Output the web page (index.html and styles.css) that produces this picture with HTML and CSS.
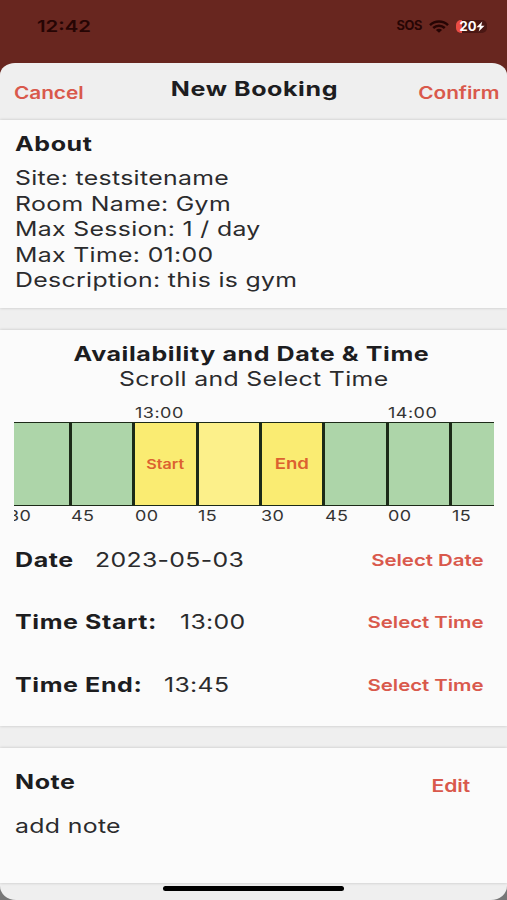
FILE: index.html
```html
<!DOCTYPE html>
<html lang="en">
  <head>
    <meta charset="UTF-8" />
    <title>New Booking</title>
    <link rel="stylesheet" href="styles.css">
  </head>
  <body>
    <div class="status-bar">
      <span class="clock wide">12:42</span>
      <div class="status-icons">
        <span class="sos">SOS</span>
        <svg class="wifi" viewBox="0 0 20 13" width="20" height="13" preserveAspectRatio="none">
          <path d="M1 5.2C6 0.4 14 0.4 19 5.2" />
          <path d="M4.2 8C7.6 4.9 12.4 4.9 15.8 8" />
          <path class="dot" d="M6.9 9.9C8.8 8.3 11.2 8.3 13.1 9.9L10 12.8Z" />
        </svg>
        <div class="battery">
          <span>20</span>
          <svg viewBox="0 0 8 12" width="9" height="11" preserveAspectRatio="none">
            <path d="M5.6 0.5L0.4 6.8H3.4L2.4 11.5L7.6 5.2H4.6Z" />
          </svg>
        </div>
      </div>
    </div>

    <div class="sheet">
      <header class="header">
        <button class="link cancel wide">Cancel</button>
        <h1 class="wide center">New Booking</h1>
        <button class="link confirm wide right">Confirm</button>
      </header>

      <section class="card about">
        <h2 class="wide">About</h2>
        <p class="wide">Site: testsitename</p>
        <p class="wide">Room Name: Gym</p>
        <p class="wide">Max Session: 1 / day</p>
        <p class="wide">Max Time: 01:00</p>
        <p class="wide">Description: this is gym</p>
      </section>

      <section class="card booking">
        <div class="booking-title">
          <h2 class="wide center">Availability and Date &amp; Time</h2>
          <p class="wide center">Scroll and Select Time</p>
        </div>

        <div class="timeline">
          <div class="slots">
            <div class="slot"><span class="hour"></span><div class="block"></div><span class="minute wide">30</span></div>
            <div class="slot"><span class="hour"></span><div class="block"></div><span class="minute wide">45</span></div>
            <div class="slot"><span class="hour wide">13:00</span><div class="block picked"><span class="wide center">Start</span></div><span class="minute wide">00</span></div>
            <div class="slot"><span class="hour"></span><div class="block between"></div><span class="minute wide">15</span></div>
            <div class="slot"><span class="hour"></span><div class="block picked end"><span class="wide center">End</span></div><span class="minute wide">30</span></div>
            <div class="slot"><span class="hour"></span><div class="block"></div><span class="minute wide">45</span></div>
            <div class="slot"><span class="hour wide">14:00</span><div class="block"></div><span class="minute wide">00</span></div>
            <div class="slot"><span class="hour"></span><div class="block"></div><span class="minute wide">15</span></div>
          </div>
        </div>

        <div class="row date">
          <div class="field"><h2 class="wide">Date</h2><p class="wide">2023-05-03</p></div>
          <button class="link wide right">Select Date</button>
        </div>
        <div class="row start">
          <div class="field"><h2 class="wide">Time Start:</h2><p class="wide">13:00</p></div>
          <button class="link wide right">Select Time</button>
        </div>
        <div class="row finish">
          <div class="field"><h2 class="wide">Time End:</h2><p class="wide">13:45</p></div>
          <button class="link wide right">Select Time</button>
        </div>
      </section>

      <section class="card note">
        <div class="note-head">
          <h2 class="wide">Note</h2>
          <button class="link edit wide right">Edit</button>
        </div>
        <p class="wide">add note</p>
      </section>

      <footer class="footer">
        <div class="home-indicator"></div>
      </footer>
    </div>
  </body>
</html>
```
FILE: styles.css
```css
* {
  box-sizing: border-box;
}
body {
  margin: 0;
  height: 900px;
  overflow: hidden;
  display: flex;
  flex-direction: column;
  background: linear-gradient(#68261f 100px, #777 100px);
  color: #1d1d1f;
  font-family: Inter, "Liberation Sans", sans-serif;
}
h1, h2, p {
  margin: 0;
  white-space: nowrap;
}
h1, h2 {
  font-size: 20.2px;
  line-height: 26px;
  font-weight: 700;
  letter-spacing: 0.47px;
}
p {
  font-size: 20px;
  line-height: 25.5px;
  letter-spacing: 0.28px;
  color: #2b2b2d;
}

/* extended letterforms */
.wide {
  display: block;
  width: max-content;
  transform: scaleX(1.24);
  transform-origin: left center;
}
.wide.center {
  transform-origin: center;
}
.wide.right {
  transform-origin: right center;
}

.link {
  padding: 0;
  border: none;
  background: none;
  color: #d9594c;
  font-family: inherit;
  font-size: 16.5px;
  font-weight: 600;
  line-height: 24px;
  letter-spacing: -0.05px;
  white-space: nowrap;
  cursor: pointer;
}

/* status bar */
.status-bar {
  flex: none;
  height: 63px;
  padding: 14px 20px 0 37px;
  display: flex;
  justify-content: space-between;
  align-items: flex-start;
  color: #260504;
}
.clock {
  font-size: 16.4px;
  line-height: 25px;
  font-weight: 600;
}
.status-icons {
  display: flex;
  align-items: center;
  height: 24px;
}
.sos {
  margin-top: -2px;
  font-size: 12.8px;
  font-weight: 700;
  letter-spacing: -0.4px;
}
.wifi {
  margin: 0 7px;
  fill: none;
  stroke: #260504;
  stroke-width: 2.5;
}
.wifi .dot {
  fill: #260504;
  stroke: none;
}
.battery {
  display: flex;
  align-items: center;
  justify-content: center;
  width: 31px;
  height: 13px;
  padding-left: 2px;
  border-radius: 5px;
  background: linear-gradient(90deg, #ea4c43 6px, #4a1713 6px);
  color: #fff;
  font-size: 13px;
  font-weight: 700;
}
.battery svg {
  fill: #fff;
}

/* sheet */
.sheet {
  flex: 1;
  display: flex;
  flex-direction: column;
  background: #efefef;
  border-radius: 15px 15px 16px 16px / 12px 12px 14px 14px;
  overflow: hidden;
}
.header {
  height: 57px;
  padding: 0 8px 0 14px;
  display: grid;
  grid-template-columns: 1fr auto 1fr;
  align-items: start;
}
.header h1 {
  margin: 13px 4px 0 0;
}
.header .link {
  margin-top: 18px;
  font-size: 16.8px;
}
.confirm {
  justify-self: end;
}
.card {
  background: #fbfbfb;
  box-shadow: 0 0 3px rgba(0, 0, 0, 0.2);
  margin-bottom: 22px;
  padding: 0 15px;
}
.about {
  height: 188px;
  padding-top: 11px;
}
.about h2 {
  margin-bottom: 9px;
}

/* availability */
.booking {
  height: 396px;
  padding-top: 11px;
}
.booking-title {
  display: flex;
  flex-direction: column;
  align-items: center;
  margin-right: 6px;
}
.booking-title h2 {
  margin-left: 1px;
}
.booking-title p {
  margin-left: 6px;
}
.timeline {
  width: 480px;
  margin: 10px 0 4px -1px;
  overflow: hidden;
}
.slots {
  display: flex;
  margin-left: -5.4px;
}
.slot {
  flex: none;
  width: 63.35px;
}
.hour, .minute {
  display: block;
  height: 19px;
  font-size: 14.5px;
  line-height: 19px;
  letter-spacing: 0.4px;
  color: #333;
}
.hour.wide, .minute.wide {
  margin-left: -0.5px;
}
.block {
  display: flex;
  justify-content: center;
  align-items: center;
  height: 84px;
  border: solid #1c2a18;
  border-width: 1px 3px 1px 0;
  background: #add5a9;
  color: #dc6130;
  font-size: 13px;
  font-weight: 600;
}
.picked {
  background: #faec72;
}
.between {
  background: #fcf08a;
}
.end {
  font-size: 15px;
}
.row {
  display: flex;
  justify-content: space-between;
  align-items: center;
  height: 62.5px;
  padding-right: 9px;
}
.field {
  display: flex;
}
.field p {
  line-height: 26px;
}
.date .field {
  gap: 33px;
}
.start .field {
  gap: 50px;
}
.finish .field {
  gap: 46px;
}

/* note */
.note {
  flex: none;
  height: 135px;
  margin-bottom: 0;
  padding-top: 21px;
}
.note-head {
  display: flex;
  justify-content: space-between;
  padding-right: 22px;
  margin-bottom: 16px;
}
.edit {
  margin-top: 5px;
  font-size: 17px;
}
.footer {
  padding-top: 3px;
}
.home-indicator {
  width: 181px;
  height: 5px;
  margin: 0 auto;
  border-radius: 3px;
  background: #000;
}
```
